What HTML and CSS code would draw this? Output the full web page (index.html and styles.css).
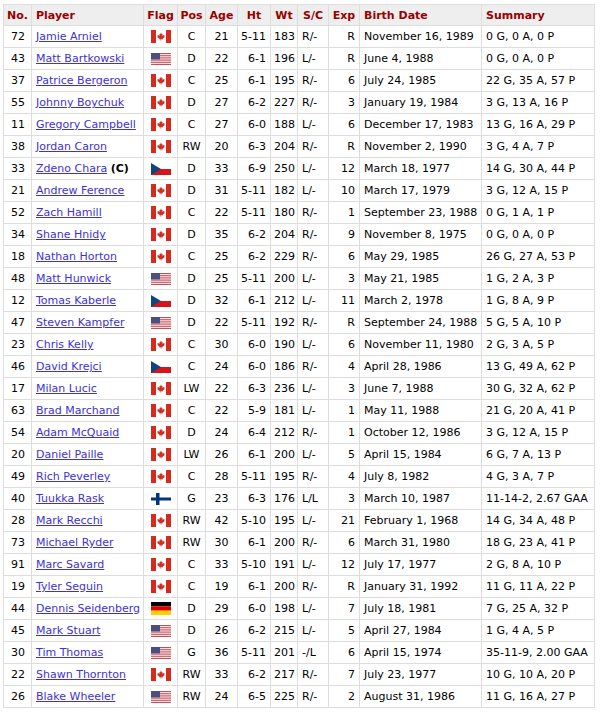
FILE: index.html
```html
<!DOCTYPE html>
<html>
<head>
<meta charset="utf-8">
<link rel="stylesheet" href="styles.css">
</head>
<body>
<svg class="defs" width="0" height="0" aria-hidden="true">
  <defs>
    <symbol id="ca" viewBox="0 0 40 24" preserveAspectRatio="none">
      <rect width="40" height="24" fill="#fff"/>
      <rect width="10" height="24" fill="#d52b1e"/>
      <rect x="30" width="10" height="24" fill="#d52b1e"/>
      <path fill="#d52b1e" d="M20 4.5 L21.6 7.8 L23.2 7 L22.5 11 L24.7 8.8 L25.2 10.2 L27.4 9.8 L26.6 12.3 L27.6 12.8 L23 16.2 L23.5 17.5 L20.5 17 L20.5 20 L19.5 20 L19.5 17 L16.5 17.5 L17 16.2 L12.4 12.8 L13.4 12.3 L12.6 9.8 L14.8 10.2 L15.3 8.8 L17.5 11 L16.8 7 L18.4 7.8 Z"/>
    </symbol>
    <symbol id="us" viewBox="0 0 20 13" preserveAspectRatio="none">
      <rect width="20" height="13" fill="#fff"/>
      <rect y="0" width="20" height="1" fill="#c3404a"/>
      <rect y="2" width="20" height="1" fill="#c3404a"/>
      <rect y="4" width="20" height="1" fill="#c3404a"/>
      <rect y="6" width="20" height="1" fill="#c3404a"/>
      <rect y="8" width="20" height="1" fill="#c3404a"/>
      <rect y="10" width="20" height="1" fill="#c3404a"/>
      <rect y="12" width="20" height="1" fill="#c3404a"/>
      <rect width="9" height="7" fill="#4a4f80"/>
    </symbol>
    <symbol id="cz" viewBox="0 0 20 12" preserveAspectRatio="none">
      <rect width="20" height="6" fill="#fff"/>
      <rect y="6" width="20" height="6" fill="#d7141a"/>
      <path d="M0 0 L10 6 L0 12 Z" fill="#11457e"/>
    </symbol>
    <symbol id="fi" viewBox="0 0 20 12" preserveAspectRatio="none">
      <rect width="20" height="12" fill="#fff"/>
      <rect x="5" width="3.5" height="12" fill="#003580"/>
      <rect y="4.5" width="20" height="3" fill="#003580"/>
    </symbol>
    <symbol id="de" viewBox="0 0 20 12" preserveAspectRatio="none">
      <rect width="20" height="4" fill="#000"/>
      <rect y="4" width="20" height="4" fill="#dd0000"/>
      <rect y="8" width="20" height="4" fill="#ffce00"/>
    </symbol>
  </defs>
</svg>
<table class="roster">
  <colgroup>
    <col class="c-no"><col class="c-player"><col class="c-flag"><col class="c-pos"><col class="c-age"><col class="c-ht"><col class="c-wt"><col class="c-sc"><col class="c-exp"><col class="c-birth"><col class="c-sum">
  </colgroup>
  <thead>
    <tr>
      <th>No.</th><th class="l">Player</th><th>Flag</th><th>Pos</th><th>Age</th><th>Ht</th><th>Wt</th><th>S/C</th><th>Exp</th><th class="l">Birth Date</th><th class="l">Summary</th>
    </tr>
  </thead>
  <tbody>
<tr><td class="no">72</td><td class="pl"><a href="#">Jamie Arniel</a></td><td class="fl"><svg class="flag ca"><use href="#ca"/></svg></td><td class="c">C</td><td class="c">21</td><td class="r">5-11</td><td class="c">183</td><td class="l">R/-</td><td class="r">R</td><td class="l">November 16, 1989</td><td class="l">0 G, 0 A, 0 P</td></tr>
<tr><td class="no">43</td><td class="pl"><a href="#">Matt Bartkowski</a></td><td class="fl"><svg class="flag"><use href="#us"/></svg></td><td class="c">D</td><td class="c">22</td><td class="r">6-1</td><td class="c">196</td><td class="l">L/-</td><td class="r">R</td><td class="l">June 4, 1988</td><td class="l">0 G, 0 A, 0 P</td></tr>
<tr><td class="no">37</td><td class="pl"><a href="#">Patrice Bergeron</a></td><td class="fl"><svg class="flag ca"><use href="#ca"/></svg></td><td class="c">C</td><td class="c">25</td><td class="r">6-1</td><td class="c">195</td><td class="l">R/-</td><td class="r">6</td><td class="l">July 24, 1985</td><td class="l">22 G, 35 A, 57 P</td></tr>
<tr><td class="no">55</td><td class="pl"><a href="#">Johnny Boychuk</a></td><td class="fl"><svg class="flag ca"><use href="#ca"/></svg></td><td class="c">D</td><td class="c">27</td><td class="r">6-2</td><td class="c">227</td><td class="l">R/-</td><td class="r">3</td><td class="l">January 19, 1984</td><td class="l">3 G, 13 A, 16 P</td></tr>
<tr><td class="no">11</td><td class="pl"><a href="#">Gregory Campbell</a></td><td class="fl"><svg class="flag ca"><use href="#ca"/></svg></td><td class="c">C</td><td class="c">27</td><td class="r">6-0</td><td class="c">188</td><td class="l">L/-</td><td class="r">6</td><td class="l">December 17, 1983</td><td class="l">13 G, 16 A, 29 P</td></tr>
<tr><td class="no">38</td><td class="pl"><a href="#">Jordan Caron</a></td><td class="fl"><svg class="flag ca"><use href="#ca"/></svg></td><td class="c">RW</td><td class="c">20</td><td class="r">6-3</td><td class="c">204</td><td class="l">R/-</td><td class="r">R</td><td class="l">November 2, 1990</td><td class="l">3 G, 4 A, 7 P</td></tr>
<tr><td class="no">33</td><td class="pl"><a href="#">Zdeno Chara</a> <b class="cap">(C)</b></td><td class="fl"><svg class="flag"><use href="#cz"/></svg></td><td class="c">D</td><td class="c">33</td><td class="r">6-9</td><td class="c">250</td><td class="l">L/-</td><td class="r">12</td><td class="l">March 18, 1977</td><td class="l">14 G, 30 A, 44 P</td></tr>
<tr><td class="no">21</td><td class="pl"><a href="#">Andrew Ference</a></td><td class="fl"><svg class="flag ca"><use href="#ca"/></svg></td><td class="c">D</td><td class="c">31</td><td class="r">5-11</td><td class="c">182</td><td class="l">L/-</td><td class="r">10</td><td class="l">March 17, 1979</td><td class="l">3 G, 12 A, 15 P</td></tr>
<tr><td class="no">52</td><td class="pl"><a href="#">Zach Hamill</a></td><td class="fl"><svg class="flag ca"><use href="#ca"/></svg></td><td class="c">C</td><td class="c">22</td><td class="r">5-11</td><td class="c">180</td><td class="l">R/-</td><td class="r">1</td><td class="l">September 23, 1988</td><td class="l">0 G, 1 A, 1 P</td></tr>
<tr><td class="no">34</td><td class="pl"><a href="#">Shane Hnidy</a></td><td class="fl"><svg class="flag ca"><use href="#ca"/></svg></td><td class="c">D</td><td class="c">35</td><td class="r">6-2</td><td class="c">204</td><td class="l">R/-</td><td class="r">9</td><td class="l">November 8, 1975</td><td class="l">0 G, 0 A, 0 P</td></tr>
<tr><td class="no">18</td><td class="pl"><a href="#">Nathan Horton</a></td><td class="fl"><svg class="flag ca"><use href="#ca"/></svg></td><td class="c">C</td><td class="c">25</td><td class="r">6-2</td><td class="c">229</td><td class="l">R/-</td><td class="r">6</td><td class="l">May 29, 1985</td><td class="l">26 G, 27 A, 53 P</td></tr>
<tr><td class="no">48</td><td class="pl"><a href="#">Matt Hunwick</a></td><td class="fl"><svg class="flag"><use href="#us"/></svg></td><td class="c">D</td><td class="c">25</td><td class="r">5-11</td><td class="c">200</td><td class="l">L/-</td><td class="r">3</td><td class="l">May 21, 1985</td><td class="l">1 G, 2 A, 3 P</td></tr>
<tr><td class="no">12</td><td class="pl"><a href="#">Tomas Kaberle</a></td><td class="fl"><svg class="flag"><use href="#cz"/></svg></td><td class="c">D</td><td class="c">32</td><td class="r">6-1</td><td class="c">212</td><td class="l">L/-</td><td class="r">11</td><td class="l">March 2, 1978</td><td class="l">1 G, 8 A, 9 P</td></tr>
<tr><td class="no">47</td><td class="pl"><a href="#">Steven Kampfer</a></td><td class="fl"><svg class="flag"><use href="#us"/></svg></td><td class="c">D</td><td class="c">22</td><td class="r">5-11</td><td class="c">192</td><td class="l">R/-</td><td class="r">R</td><td class="l">September 24, 1988</td><td class="l">5 G, 5 A, 10 P</td></tr>
<tr><td class="no">23</td><td class="pl"><a href="#">Chris Kelly</a></td><td class="fl"><svg class="flag ca"><use href="#ca"/></svg></td><td class="c">C</td><td class="c">30</td><td class="r">6-0</td><td class="c">190</td><td class="l">L/-</td><td class="r">6</td><td class="l">November 11, 1980</td><td class="l">2 G, 3 A, 5 P</td></tr>
<tr><td class="no">46</td><td class="pl"><a href="#">David Krejci</a></td><td class="fl"><svg class="flag"><use href="#cz"/></svg></td><td class="c">C</td><td class="c">24</td><td class="r">6-0</td><td class="c">186</td><td class="l">R/-</td><td class="r">4</td><td class="l">April 28, 1986</td><td class="l">13 G, 49 A, 62 P</td></tr>
<tr><td class="no">17</td><td class="pl"><a href="#">Milan Lucic</a></td><td class="fl"><svg class="flag ca"><use href="#ca"/></svg></td><td class="c">LW</td><td class="c">22</td><td class="r">6-3</td><td class="c">236</td><td class="l">L/-</td><td class="r">3</td><td class="l">June 7, 1988</td><td class="l">30 G, 32 A, 62 P</td></tr>
<tr><td class="no">63</td><td class="pl"><a href="#">Brad Marchand</a></td><td class="fl"><svg class="flag ca"><use href="#ca"/></svg></td><td class="c">C</td><td class="c">22</td><td class="r">5-9</td><td class="c">181</td><td class="l">L/-</td><td class="r">1</td><td class="l">May 11, 1988</td><td class="l">21 G, 20 A, 41 P</td></tr>
<tr><td class="no">54</td><td class="pl"><a href="#">Adam McQuaid</a></td><td class="fl"><svg class="flag ca"><use href="#ca"/></svg></td><td class="c">D</td><td class="c">24</td><td class="r">6-4</td><td class="c">212</td><td class="l">R/-</td><td class="r">1</td><td class="l">October 12, 1986</td><td class="l">3 G, 12 A, 15 P</td></tr>
<tr><td class="no">20</td><td class="pl"><a href="#">Daniel Paille</a></td><td class="fl"><svg class="flag ca"><use href="#ca"/></svg></td><td class="c">LW</td><td class="c">26</td><td class="r">6-1</td><td class="c">200</td><td class="l">L/-</td><td class="r">5</td><td class="l">April 15, 1984</td><td class="l">6 G, 7 A, 13 P</td></tr>
<tr><td class="no">49</td><td class="pl"><a href="#">Rich Peverley</a></td><td class="fl"><svg class="flag ca"><use href="#ca"/></svg></td><td class="c">C</td><td class="c">28</td><td class="r">5-11</td><td class="c">195</td><td class="l">R/-</td><td class="r">4</td><td class="l">July 8, 1982</td><td class="l">4 G, 3 A, 7 P</td></tr>
<tr><td class="no">40</td><td class="pl"><a href="#">Tuukka Rask</a></td><td class="fl"><svg class="flag"><use href="#fi"/></svg></td><td class="c">G</td><td class="c">23</td><td class="r">6-3</td><td class="c">176</td><td class="l">L/L</td><td class="r">3</td><td class="l">March 10, 1987</td><td class="l">11-14-2, 2.67 GAA</td></tr>
<tr><td class="no">28</td><td class="pl"><a href="#">Mark Recchi</a></td><td class="fl"><svg class="flag ca"><use href="#ca"/></svg></td><td class="c">RW</td><td class="c">42</td><td class="r">5-10</td><td class="c">195</td><td class="l">L/-</td><td class="r">21</td><td class="l">February 1, 1968</td><td class="l">14 G, 34 A, 48 P</td></tr>
<tr><td class="no">73</td><td class="pl"><a href="#">Michael Ryder</a></td><td class="fl"><svg class="flag ca"><use href="#ca"/></svg></td><td class="c">RW</td><td class="c">30</td><td class="r">6-1</td><td class="c">200</td><td class="l">R/-</td><td class="r">6</td><td class="l">March 31, 1980</td><td class="l">18 G, 23 A, 41 P</td></tr>
<tr><td class="no">91</td><td class="pl"><a href="#">Marc Savard</a></td><td class="fl"><svg class="flag ca"><use href="#ca"/></svg></td><td class="c">C</td><td class="c">33</td><td class="r">5-10</td><td class="c">191</td><td class="l">L/-</td><td class="r">12</td><td class="l">July 17, 1977</td><td class="l">2 G, 8 A, 10 P</td></tr>
<tr><td class="no">19</td><td class="pl"><a href="#">Tyler Seguin</a></td><td class="fl"><svg class="flag ca"><use href="#ca"/></svg></td><td class="c">C</td><td class="c">19</td><td class="r">6-1</td><td class="c">200</td><td class="l">R/-</td><td class="r">R</td><td class="l">January 31, 1992</td><td class="l">11 G, 11 A, 22 P</td></tr>
<tr><td class="no">44</td><td class="pl"><a href="#">Dennis Seidenberg</a></td><td class="fl"><svg class="flag de"><use href="#de"/></svg></td><td class="c">D</td><td class="c">29</td><td class="r">6-0</td><td class="c">198</td><td class="l">L/-</td><td class="r">7</td><td class="l">July 18, 1981</td><td class="l">7 G, 25 A, 32 P</td></tr>
<tr><td class="no">45</td><td class="pl"><a href="#">Mark Stuart</a></td><td class="fl"><svg class="flag"><use href="#us"/></svg></td><td class="c">D</td><td class="c">26</td><td class="r">6-2</td><td class="c">215</td><td class="l">L/-</td><td class="r">5</td><td class="l">April 27, 1984</td><td class="l">1 G, 4 A, 5 P</td></tr>
<tr><td class="no">30</td><td class="pl"><a href="#">Tim Thomas</a></td><td class="fl"><svg class="flag"><use href="#us"/></svg></td><td class="c">G</td><td class="c">36</td><td class="r">5-11</td><td class="c">201</td><td class="l">-/L</td><td class="r">6</td><td class="l">April 15, 1974</td><td class="l">35-11-9, 2.00 GAA</td></tr>
<tr><td class="no">22</td><td class="pl"><a href="#">Shawn Thornton</a></td><td class="fl"><svg class="flag ca"><use href="#ca"/></svg></td><td class="c">RW</td><td class="c">33</td><td class="r">6-2</td><td class="c">217</td><td class="l">R/-</td><td class="r">7</td><td class="l">July 23, 1977</td><td class="l">10 G, 10 A, 20 P</td></tr>
<tr><td class="no">26</td><td class="pl"><a href="#">Blake Wheeler</a></td><td class="fl"><svg class="flag"><use href="#us"/></svg></td><td class="c">RW</td><td class="c">24</td><td class="r">6-5</td><td class="c">225</td><td class="l">R/-</td><td class="r">2</td><td class="l">August 31, 1986</td><td class="l">11 G, 16 A, 27 P</td></tr>
  </tbody>
</table>
</body>
</html>
```

FILE: styles.css
```css
html, body {
  margin: 0;
  padding: 0;
  background: #fff;
}

body {
  padding: 4px 0 0 3px;
  font-family: "DejaVu Sans", Verdana, sans-serif;
  font-size: 11px;
  color: #000;
}

.defs {
  position: absolute;
  width: 0;
  height: 0;
  overflow: hidden;
}

.roster {
  border-collapse: collapse;
  table-layout: fixed;
  width: 591px;
  border: 1px solid #999;
}

.c-no { width: 28px; }
.c-player { width: 112px; }
.c-flag { width: 34px; }
.c-pos { width: 28px; }
.c-age { width: 32px; }
.c-ht { width: 33px; }
.c-wt { width: 27px; }
.c-sc { width: 31px; }
.c-exp { width: 31px; }
.c-birth { width: 122px; }
.c-sum { width: 113px; }

.roster th,
.roster td {
  border: 1px solid #ddd;
  height: 21px;
  padding: 0 3px;
  line-height: 13px;
  white-space: nowrap;
  overflow: hidden;
  vertical-align: middle;
}

.roster th {
  height: 20px;
  background: #eee;
  color: #990000;
  font-weight: bold;
  text-align: center;
  padding: 0 2px;
}

.roster th.l { text-align: left; padding-left: 4px; }

.roster td.no { text-align: right; padding-right: 6px; }
.roster td.pl { text-align: left; padding-left: 4px; }
.roster td.c { text-align: center; }
.roster td.r { text-align: right; padding-right: 4px; }
.roster td.l { text-align: left; padding-left: 4px; }
.roster td.fl { text-align: center; padding: 0; }

.roster a {
  color: #3d32d4;
  text-decoration: underline;
}

.cap {
  font-weight: bold;
}

.flag {
  display: inline-block;
  width: 20px;
  height: 12px;
  vertical-align: middle;
}

.flag.ca,
.flag.de {
  height: 13px;
}
```
